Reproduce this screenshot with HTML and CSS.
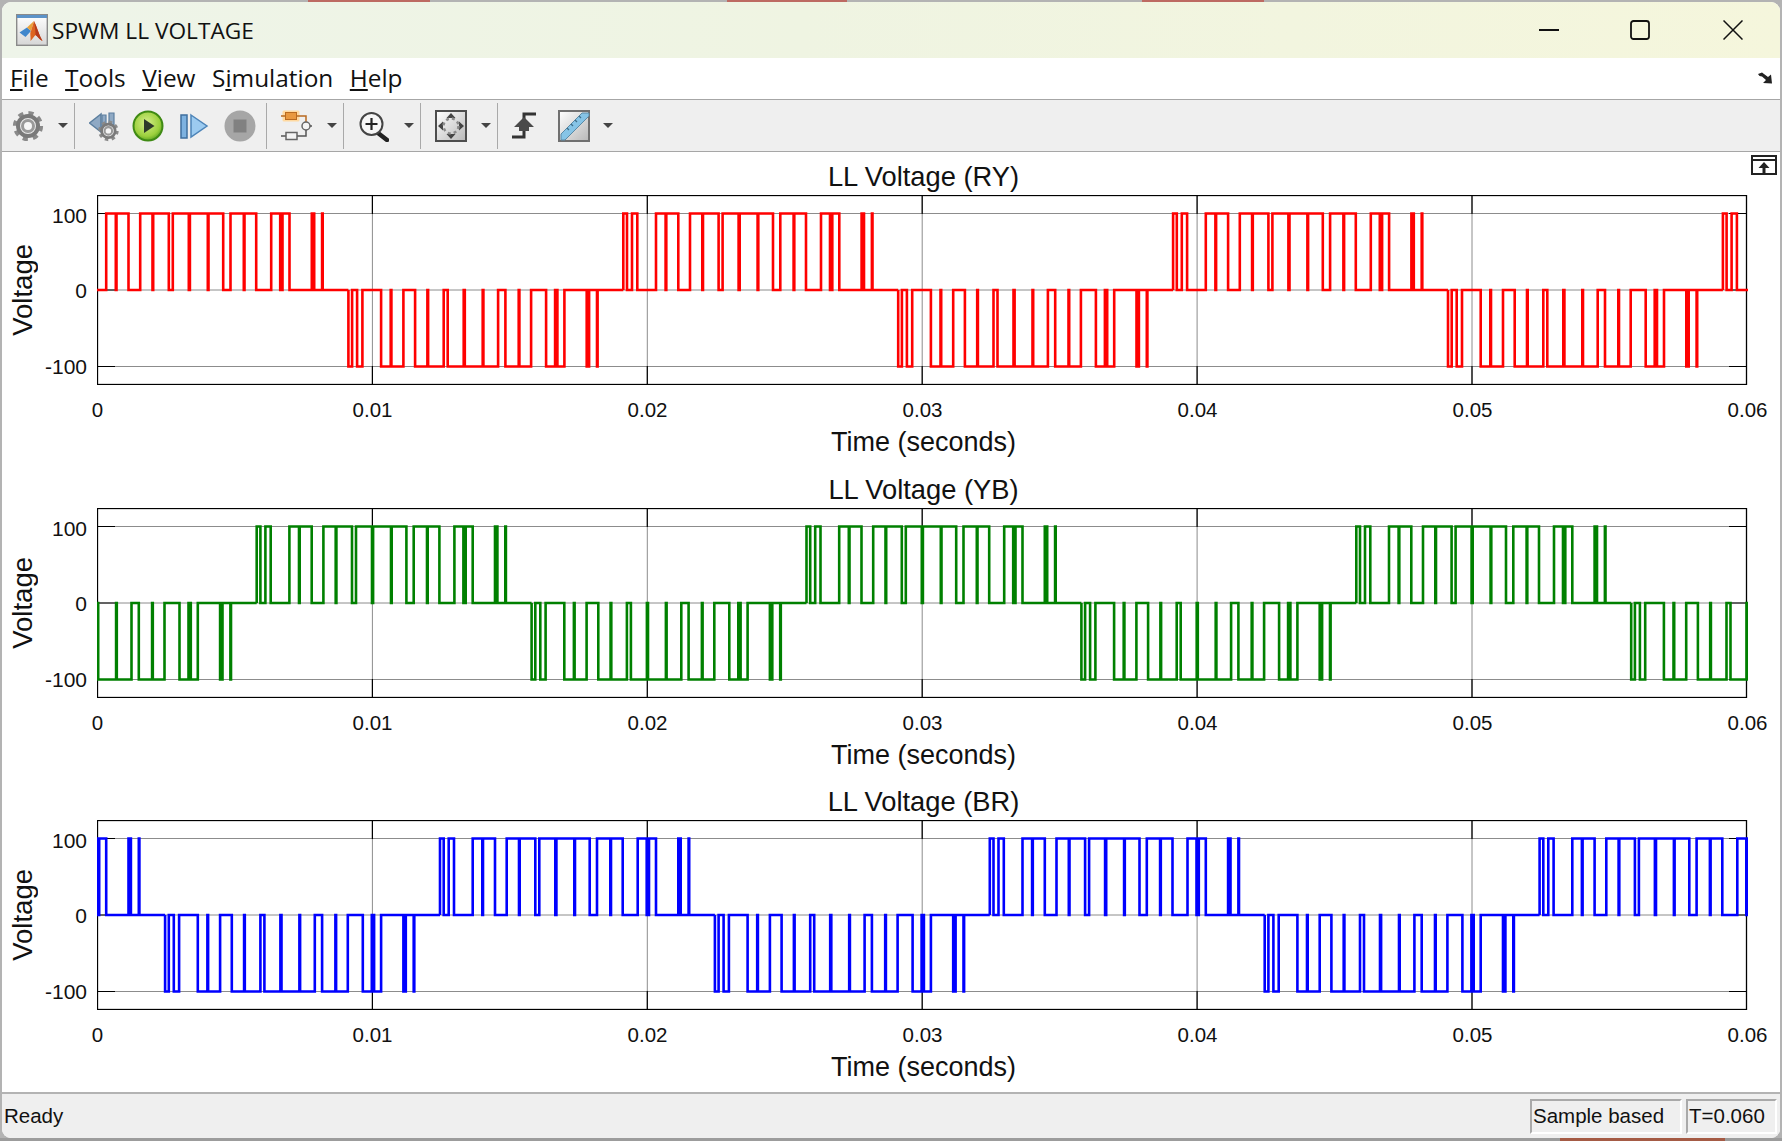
FILE: index.html
```html
<!DOCTYPE html>
<html lang="en">
<head>
<meta charset="utf-8">
<title>SPWM LL VOLTAGE</title>
<link rel="stylesheet" href="styles.css">
</head>
<body>
<svg class="defs" aria-hidden="true">
  <defs>
    <radialGradient id="playFill" cx="0.45" cy="0.4" r="0.65">
      <stop offset="0" stop-color="#d6ee8c"/><stop offset="0.7" stop-color="#9bd03c"/><stop offset="1" stop-color="#4f9a1c"/>
    </radialGradient>
    <linearGradient id="plate" x1="0" y1="0" x2="1" y2="1">
      <stop offset="0" stop-color="#ffffff"/><stop offset="1" stop-color="#b8b8b8"/>
    </linearGradient>
    <linearGradient id="titleFill" x1="0" y1="0" x2="0" y2="1">
      <stop offset="0" stop-color="#ffffff"/><stop offset="1" stop-color="#d6d6d6"/>
    </linearGradient>
    <g id="gear">
      <circle cx="16" cy="16" r="12.6" class="gear-teeth"/>
      <circle cx="16" cy="16" r="10" class="gear-ring"/>
      <circle cx="16" cy="16" r="5.5" class="gear-hole"/>
    </g>
    <path id="half" class="wave" d="M0 0V-76.5H3.7V0H8.7V-76.5H14V0H32.7V-76.5H42.3V0H43V-76.5H55V0H66.7V-76.5H79V0H79.7V-76.5H95.3V0H99.3V-76.5H115.3V0H116.4V-76.5H134.3V0H135V-76.5H149.7V0H157V-76.5H170.3V0H171V-76.5H182.7V0H197.7V-76.5H206.7V0H209V-76.5H216V0H238.3V-76.5H240.7V0H248.6V-76.5H249.2V0H274.9"/>
    <g id="period">
      <use href="#half"/>
      <use href="#half" transform="translate(274.9) scale(1 -1)"/>
    </g>
    <g id="frame">
      <path class="grid" d="M0 18.5H1650M0 95H1650M0 171.5H1650M275.4 0V190M550.3 0V190M825.2 0V190M1100.1 0V190M1375 0V190"/>
      <path class="tick" d="M0.5 18.5H18M0.5 95H18M0.5 171.5H18M1649.5 18.5H1632M1649.5 95H1632M1649.5 171.5H1632M275.4 0V19M550.3 0V19M825.2 0V19M1100.1 0V19M1375 0V19M275.4 190V171M550.3 190V171M825.2 190V171M1100.1 190V171M1375 190V171"/>
      <rect class="box" x="0.5" y="0.5" width="1649" height="189"/>
    </g>
  </defs>
</svg>

<div class="window">
  <header class="titlebar">
    <svg class="logo" viewBox="0 0 32 32" width="32" height="32">
      <rect x="0.7" y="0.7" width="30.6" height="30.6" fill="url(#titleFill)" stroke="#8a8a8a" stroke-width="1.4"/>
      <rect x="1" y="1" width="30" height="3" fill="#5c93c8"/>
      <path d="M3.5 18.5 11 13.5 15 17 9.5 23z" fill="#3f86cc"/>
      <path d="M11 13.5 18 7 15 17z" fill="#e9a13a"/>
      <path d="M18 7C21 13 23 21 26.5 27 23.5 25.500 21.500 22.500 19.500 21 17.500 23 16.500 25 14.500 27 15 22 13.500 19 15 17z" fill="#dd6420"/>
      <path d="M18 7C19 13 19.500 17 19.500 21 21.500 22.500 23.500 25.500 26.500 27 23 21 21 13 18 7z" fill="#b53a1c"/>
    </svg>
    <span class="title-text">SPWM LL VOLTAGE</span>
    <div class="win-controls">
      <svg class="win-btn win-min" viewBox="0 0 20 20" width="20" height="20"><path d="M0 10H20"/></svg>
      <svg class="win-btn win-max" viewBox="0 0 20 20" width="20" height="20"><rect x="1" y="1" width="18" height="18" rx="2.500"/></svg>
      <svg class="win-btn win-close" viewBox="0 0 20 20" width="20" height="20"><path d="M0.500 0.500 19.500 19.500M19.500 0.500 0.500 19.500"/></svg>
    </div>
  </header>

  <nav class="menubar">
    <span class="menu-item"><u>F</u>ile</span>
    <span class="menu-item"><u>T</u>ools</span>
    <span class="menu-item"><u>V</u>iew</span>
    <span class="menu-item">S<u>i</u>mulation</span>
    <span class="menu-item"><u>H</u>elp</span>
    <svg class="menu-arrow" viewBox="0 0 16 12" width="16" height="12"><path d="M1 2 5 0.500 11 5 14 2.500 15 11.500 6 11 9 8 5 4.500 2.500 4z" fill="#222"/></svg>
  </nav>

  <div class="toolbar">
    <svg class="tool" viewBox="0 0 32 32"><use href="#gear"/></svg>
    <i class="caret ml14"></i>
    <i class="sep ml4"></i>

    <svg class="tool ml14" viewBox="0 0 32 32">
      <path d="M0.500 13 12 4V22z" fill="#8fa9c4" stroke="#5c7f9f" stroke-width="1.500"/>
      <path d="M13 5h4v12h-4zM20 3h5v12h-5z" fill="#8fa9c4" stroke="#5c7f9f" stroke-width="1.200"/>
      <g transform="translate(8.500 10) scale(0.68)"><use href="#gear"/></g>
    </svg>
    <svg class="tool ml11" viewBox="0 0 32 32">
      <circle cx="16" cy="16" r="14.500" fill="url(#playFill)" stroke="#3f8a14" stroke-width="2"/>
      <path d="M12 9 22.500 16 12 23z" fill="#2e3a2a"/>
    </svg>
    <svg class="tool ml14" viewBox="0 0 32 32">
      <rect x="3" y="5" width="6" height="23" fill="#7eb2e0" stroke="#3f6f9f" stroke-width="1.500"/>
      <path d="M13 5 29 16 13 27z" fill="#9ccbf0" stroke="#4d84b8" stroke-width="1.500"/>
    </svg>
    <svg class="tool ml14" viewBox="0 0 32 32">
      <circle cx="16" cy="16" r="15.500" fill="#a6a6a6"/>
      <rect x="9.500" y="9.500" width="13" height="13" fill="#818181"/>
    </svg>
    <i class="sep ml10"></i>

    <svg class="tool ml14" viewBox="0 0 32 32">
      <rect x="1.500" y="0.500" width="17" height="11" rx="1.500" fill="#ffd9a0"/>
      <rect x="4.500" y="2.500" width="11" height="7" fill="#e9983f" stroke="#b96a20"/>
      <path d="M0 6H4M16 6H25V12" fill="none" stroke="#b96a20" stroke-width="1.500"/>
      <circle cx="25" cy="16" r="4" fill="#f4f4f4" stroke="#666" stroke-width="1.500"/>
      <path d="M29 16H31M25 20V26H16M5 26H0" fill="none" stroke="#555" stroke-width="1.500"/>
      <rect x="5" y="22.500" width="11" height="7" fill="#f4f4f4" stroke="#666" stroke-width="1.500"/>
    </svg>
    <i class="caret ml14"></i>
    <i class="sep ml4"></i>

    <svg class="tool ml13" viewBox="0 0 32 32">
      <path d="M21 23 30 30" stroke="#222" stroke-width="4.500" stroke-linecap="round"/>
      <circle cx="14.500" cy="14" r="11" fill="#f6f6f6" stroke="#444" stroke-width="2"/>
      <path d="M14.500 8V20M8.500 14H20.500" stroke="#222" stroke-width="2.200"/>
    </svg>
    <i class="caret ml15"></i>
    <i class="sep ml4"></i>

    <svg class="tool ml14" viewBox="0 0 32 32">
      <rect x="1" y="1" width="30" height="30" fill="url(#plate)" stroke="#4d4d4d" stroke-width="2"/>
      <path d="M16 3 11.500 8H20.500zM16 29 11.500 24H20.500zM3 16 8 11.500V20.500zM29 16 24 11.500V20.500z" fill="#444"/>
      <circle cx="16" cy="16" r="7.500" fill="none" stroke="#8a8a8a" stroke-width="2.500" stroke-dasharray="3 3"/>
    </svg>
    <i class="caret ml14"></i>
    <i class="sep ml4"></i>

    <svg class="tool ml10" viewBox="0 0 32 32">
      <path d="M28 4H16V27H4" fill="none" stroke="#333" stroke-width="3"/>
      <path d="M16 7 6 17H11V21H21V17H26z" fill="#4a4a4a"/>
    </svg>
    <svg class="tool ml18" viewBox="0 0 32 32">
      <rect x="1" y="1" width="30" height="30" fill="url(#plate)" stroke="#707070" stroke-width="2"/>
      <path d="M3 24 24 3H31V6L7 30H3z" fill="#86c4e6" stroke="#5a8aa6"/>
      <path d="M9 18l2 2M13 14l2 2M17 10l2 2M21 6l2 2" stroke="#3f6f8a" stroke-width="1.300"/>
    </svg>
    <i class="caret ml13"></i>
  </div>

  <main class="content">
    <svg class="undock" viewBox="0 0 26 20" width="26" height="20">
      <rect x="1" y="1" width="24" height="18" fill="#fff" stroke="#222" stroke-width="2"/>
      <path d="M1 5H25" stroke="#222" stroke-width="2"/>
      <path d="M13 7 7.500 13H11.500V18H14.500V13H18.500z" fill="#222"/>
    </svg>

    <section class="plot">
      <h2 class="plot-title">LL Voltage (RY)</h2>
      <div class="plot-row">
        <div class="y-label"><span>Voltage</span></div>
        <div class="y-ticks"><span>100</span><span>0</span><span>-100</span></div>
        <svg class="axes" viewBox="0 0 1651 190">
          <use href="#frame"/>
          <g class="trace-red">
            <use href="#period" x="-23.500" y="95"/><use href="#period" x="526.300" y="95"/><use href="#period" x="1076.100" y="95"/><use href="#period" x="1625.900" y="95"/>
          </g>
        </svg>
      </div>
      <div class="x-ticks"><span>0</span><span>0.01</span><span>0.02</span><span>0.03</span><span>0.04</span><span>0.05</span><span>0.06</span></div>
      <div class="x-label">Time (seconds)</div>
    </section>

    <section class="plot">
      <h2 class="plot-title">LL Voltage (YB)</h2>
      <div class="plot-row">
        <div class="y-label"><span>Voltage</span></div>
        <div class="y-ticks"><span>100</span><span>0</span><span>-100</span></div>
        <svg class="axes" viewBox="0 0 1651 190">
          <use href="#frame"/>
          <g class="trace-green">
            <use href="#period" x="-390.100" y="95"/><use href="#period" x="159.700" y="95"/><use href="#period" x="709.500" y="95"/><use href="#period" x="1259.300" y="95"/>
          </g>
        </svg>
      </div>
      <div class="x-ticks"><span>0</span><span>0.01</span><span>0.02</span><span>0.03</span><span>0.04</span><span>0.05</span><span>0.06</span></div>
      <div class="x-label">Time (seconds)</div>
    </section>

    <section class="plot">
      <h2 class="plot-title">LL Voltage (BR)</h2>
      <div class="plot-row">
        <div class="y-label"><span>Voltage</span></div>
        <div class="y-ticks"><span>100</span><span>0</span><span>-100</span></div>
        <svg class="axes" viewBox="0 0 1651 190">
          <use href="#frame"/>
          <g class="trace-blue">
            <use href="#period" x="-206.800" y="95"/><use href="#period" x="343" y="95"/><use href="#period" x="892.800" y="95"/><use href="#period" x="1442.600" y="95"/>
          </g>
        </svg>
      </div>
      <div class="x-ticks"><span>0</span><span>0.01</span><span>0.02</span><span>0.03</span><span>0.04</span><span>0.05</span><span>0.06</span></div>
      <div class="x-label">Time (seconds)</div>
    </section>
  </main>

  <footer class="statusbar">
    <span class="status-text">Ready</span>
    <span class="status-box status-mode">Sample based</span>
    <span class="status-box status-time">T=0.060</span>
  </footer>
</div>
</body>
</html>
```

FILE: styles.css
```css
* { box-sizing: border-box; }

html, body {
  margin: 0;
  height: 100%;
}

body {
  height: 1141px;
  padding: 2px 2px 3px 2px;
  background:
    linear-gradient(#bd6a62, #bd6a62) 308px 0 / 122px 2px no-repeat,
    linear-gradient(#bd6a62, #bd6a62) 727px 0 / 120px 2px no-repeat,
    linear-gradient(#bd6a62, #bd6a62) 1142px 0 / 122px 2px no-repeat,
    linear-gradient(#a55b45, #a55b45) 1560px 1138px / 165px 3px no-repeat,
    linear-gradient(#9c9c9c, #9c9c9c) 0 1138px / 100% 3px no-repeat,
    #b3b3b3;
  overflow: hidden;
  font-family: "Liberation Sans", Arial, sans-serif;
  color: #000;
}

.defs {
  position: absolute;
  width: 0;
  height: 0;
}

.window {
  display: flex;
  flex-direction: column;
  height: 100%;
  border-radius: 9px;
  overflow: hidden;
  background: #fff;
}

/* Title bar */
.titlebar {
  display: flex;
  align-items: center;
  height: 56px;
  flex: none;
  padding-left: 14px;
  background: linear-gradient(90deg, #eef4e9 0%, #eff4e2 45%, #f5f6dc 100%);
}

.logo { flex: none; }

.title-text {
  margin-left: 4px;
  font-family: "Open Sans", "Noto Sans", sans-serif;
  font-size: 22.700px;
  color: #111;
}

.win-controls {
  display: flex;
  align-items: center;
  margin-left: auto;
  margin-right: 37px;
}

.win-btn { fill: none; stroke: #111; stroke-width: 1.800; }
.win-max { margin-left: 71px; stroke-width: 1.800; }
.win-close { margin-left: 73px; stroke-width: 1.500; }

/* Menu bar */
.menubar {
  display: flex;
  align-items: center;
  gap: 16.500px;
  height: 42px;
  flex: none;
  padding: 0 7px 2px 8px;
  background: #fff;
  border-bottom: 1px solid #a6a6a6;
  font-family: "Open Sans", "Noto Sans", sans-serif;
  font-size: 24.400px;
  color: #111;
}

.menu-arrow { margin-left: auto; }

/* Toolbar */
.toolbar {
  display: flex;
  align-items: center;
  height: 52px;
  flex: none;
  padding-left: 10px;
  background: #efefef;
  border-bottom: 1px solid #a6a6a6;
}

.tool { width: 32px; height: 32px; flex: none; }

.gear-teeth { fill: none; stroke: #8a8a8a; stroke-width: 5; stroke-dasharray: 4.950 4.950; }
.gear-ring { fill: #e9e9e9; stroke: #7a7a7a; stroke-width: 4; }
.gear-hole { fill: #f6f6f6; stroke: #999; stroke-width: 3; }

.caret {
  width: 0;
  height: 0;
  flex: none;
  border-left: 5px solid transparent;
  border-right: 5px solid transparent;
  border-top: 5px solid #444;
  margin-right: 2px;
}

.sep {
  width: 1px;
  height: 46px;
  flex: none;
  background: #a9a9a9;
}

.ml4 { margin-left: 4px; }
.ml10 { margin-left: 10px; }
.ml11 { margin-left: 11px; }
.ml13 { margin-left: 13px; }
.ml14 { margin-left: 14px; }
.ml15 { margin-left: 15px; }
.ml18 { margin-left: 18px; }

/* Plots */
.content {
  position: relative;
  flex: 1;
  padding-top: 10px;
  background: #fff;
}

.undock {
  position: absolute;
  right: 3px;
  top: 3px;
}

.plot + .plot { margin-top: 18px; }
.plot:last-of-type { margin-top: 17px; }

.plot-title {
  margin: 0 0 3px;
  padding-left: 97px;
  padding-right: 32px;
  height: 30px;
  line-height: 30px;
  font-size: 27.300px;
  font-weight: 400;
  text-align: center;
  color: #111;
}

.plot-row {
  display: flex;
  height: 190px;
}

.y-label {
  display: flex;
  align-items: center;
  justify-content: center;
  width: 42px;
  flex: none;
  font-size: 27.500px;
  color: #111;
}

.y-label span {
  writing-mode: vertical-rl;
  transform: rotate(180deg);
}

.y-ticks {
  display: flex;
  flex-direction: column;
  justify-content: space-between;
  align-items: flex-end;
  width: 43px;
  flex: none;
  padding: 20.500px 0 18px;
  font-size: 21px;
  color: #111;
}

.y-ticks span {
  display: flex;
  align-items: center;
  height: 0;
}

.axes {
  width: 1651px;
  height: 190px;
  flex: none;
  margin-left: 10px;
}

.grid { fill: none; stroke: #8c8c8c; stroke-width: 1; }
.tick { fill: none; stroke: #000; stroke-width: 1.200; }
.box { fill: none; stroke: #000; stroke-width: 1.300; }
.wave { fill: none; stroke-width: 2.600; stroke-linejoin: miter; }

.trace-red { stroke: #ff0000; }
.trace-green { stroke: #008000; }
.trace-blue { stroke: #0000ff; }

.x-ticks {
  display: flex;
  justify-content: space-between;
  height: 24px;
  margin: 12.500px 0 0 95.500px;
  width: 1650px;
  line-height: 24px;
  font-size: 20.500px;
  color: #111;
}

.x-ticks span {
  display: flex;
  justify-content: center;
  width: 0;
  white-space: nowrap;
}

.x-label {
  height: 30px;
  margin-top: 5.500px;
  padding-left: 97px;
  padding-right: 32px;
  line-height: 30px;
  font-size: 27px;
  text-align: center;
  color: #111;
}

/* Status bar */
.statusbar {
  display: flex;
  align-items: center;
  height: 46px;
  flex: none;
  padding-right: 3px;
  background: #efefef;
  border-top: 2px solid #b3b3b3;
  font-size: 20.500px;
  color: #111;
}

.status-text { margin-left: 2px; margin-right: auto; }

.status-box {
  display: flex;
  align-items: center;
  height: 35px;
  padding-left: 1px;
  border: 2px solid #fff;
  border-top-color: #a9a9a9;
  border-left-color: #a9a9a9;
}

.status-mode { width: 152px; margin-right: 4px; }
.status-time { width: 91px; }
```
